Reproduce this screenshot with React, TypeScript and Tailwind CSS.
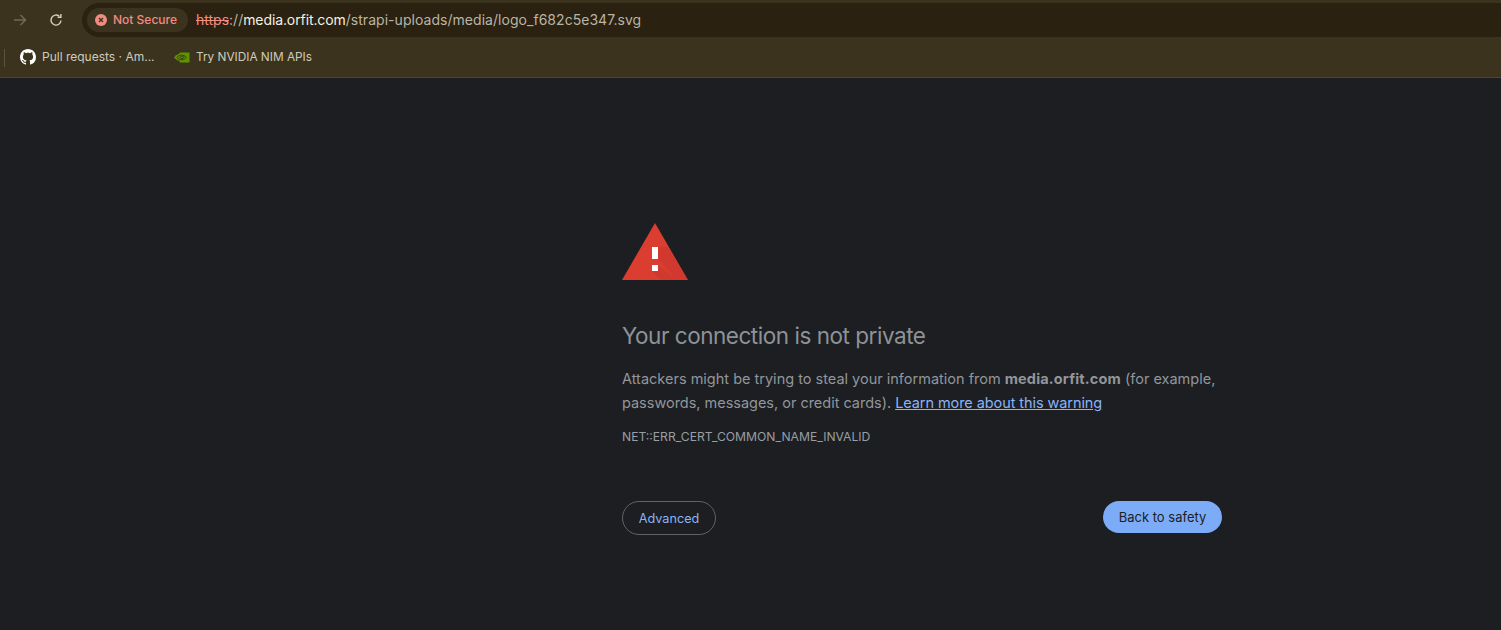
import React from "react";

function GithubMark() {
  return (
    <svg viewBox="0 0 16 16" width="16" height="16" fill="#fff">
      <path d="M8 0C3.58 0 0 3.58 0 8c0 3.54 2.29 6.53 5.47 7.59.4.07.55-.17.55-.38 0-.19-.01-.82-.01-1.49-2.01.37-2.53-.49-2.69-.94-.09-.23-.48-.94-.82-1.13-.28-.15-.68-.52-.01-.53.63-.01 1.08.58 1.23.82.72 1.21 1.87.87 2.33.66.07-.52.28-.87.51-1.07-1.78-.2-3.64-.89-3.64-3.95 0-.87.31-1.59.82-2.15-.08-.2-.36-1.02.08-2.12 0 0 .67-.21 2.2.82.64-.18 1.32-.27 2-.27s1.36.09 2 .27c1.53-1.04 2.2-.82 2.2-.82.44 1.1.16 1.92.08 2.12.51.56.82 1.27.82 2.15 0 3.07-1.87 3.75-3.65 3.95.29.25.54.73.54 1.48 0 1.07-.01 1.93-.01 2.2 0 .21.15.46.55.38A8.01 8.01 0 0 0 16 8c0-4.42-3.58-8-8-8z" />
    </svg>
  );
}

function NvidiaMark() {
  return (
    <svg viewBox="0 0 16 11" width="16" height="11">
      <rect x="5.500" y="0.500" width="10" height="10" fill="#5f9400" />
      <path d="M0 5.500C2.500 2 6 1.200 9 1.600c3 .4 5 2.400 6 3.900-1.500 2-4 3.300-7 3.500C5 9.200 2 8 0 5.500z" fill="#5f9400" />
      <path d="M2.800 5.500C4.500 3.500 7 2.900 9 3.300c1.500.3 2.800 1.200 3.500 2.200-1 1.300-2.700 2.100-4.500 2.200-2 0-3.900-.8-5.200-2.200z" fill="none" stroke="#3b331e" strokeWidth="0.900" />
      <path d="M5.600 5.500C6.600 4.600 7.800 4.400 8.900 4.700c.6.200 1 .5 1.300.8-.6.700-1.400 1-2.200 1-.9 0-1.800-.4-2.400-1z" fill="none" stroke="#3b331e" strokeWidth="0.800" />
    </svg>
  );
}

function WarningIcon() {
  return (
    <svg viewBox="0 0 66 57" width="66" height="57" className="block">
      <path d="M33 0 L66 57 L0 57 Z" fill="#db3d31" />
      <path d="M36 24 L36 36 L54 57 L66 57 L46 24 Z" fill="#c5352b" opacity="0.4" />
      <path d="M30 48 L39 57 L54 57 L36 42 L36 48 Z" fill="#c5352b" opacity="0.5" />
      <rect x="30" y="24" width="6" height="12" fill="#fff" />
      <rect x="30" y="42" width="6" height="6" fill="#fff" />
    </svg>
  );
}

export default function App() {
  return (
    <div
      className="h-[630px] w-[1501px] overflow-hidden flex flex-col bg-[#1c1e22]"
      style={{ fontFamily: "Inter, 'Liberation Sans', sans-serif" }}
    >
      <header className="h-[78px] shrink-0 bg-[#3b331e] border-b border-[#4a4534] flex flex-col">
        <div className="h-[40px] shrink-0 flex items-center pl-[12px]">
          <svg viewBox="0 0 16 16" width="16" height="16" fill="none" stroke="#726c57" strokeWidth="1.400" className="mr-[20px]">
            <path d="M2 8h11.500M8.500 3l5 5-5 5" />
          </svg>
          <svg viewBox="0 0 16 16" width="16" height="16" fill="none" stroke="#d6d0b4" strokeWidth="1.400" className="mr-[18px]">
            <path d="M13 8.500A5 5 0 1 1 11.300 4.300" />
            <path d="M9.600 5.300h3.300V2" />
          </svg>
          <div className="flex-1 h-[34px] bg-[#2a2110] rounded-l-[17px] flex items-center pl-[5px]">
            <div className="h-[24px] w-[101px] rounded-full bg-[#3b331e] flex items-center pl-[8px] gap-[6px]">
              <svg viewBox="0 0 12 12" width="12" height="12">
                <circle cx="6" cy="6" r="6" fill="#f28b82" />
                <path d="M4 4l4 4M8 4l-4 4" stroke="#3b331e" strokeWidth="1.400" />
              </svg>
              <span className="text-[12px] leading-none font-medium text-[#f28b82] whitespace-nowrap">Not Secure</span>
            </div>
            <div className="ml-[8px] mb-[2px] text-[14px] whitespace-nowrap text-[#b9b5a6]">
              <span className="text-[#f28b82] line-through">https</span>
              <span>://</span>
              <span className="text-[#f4f1e6] tracking-[-0.1px]">media.orfit.com</span>
              <span className="tracking-[0.04px]">/strapi-uploads/media/logo_f682c5e347.svg</span>
            </div>
          </div>
        </div>
        <div className="flex-1 flex items-start pt-[9px] relative pl-[20px]">
          <div className="absolute left-[4px] top-[9px] h-[18px] w-px bg-[#5a5440]" />
          <div className="flex items-center gap-[6px] w-[154px] h-[16px]">
            <GithubMark />
            <span className="leading-[16px] text-[12px] text-[#cfcbbb] whitespace-nowrap">Pull requests · Am...</span>
          </div>
          <div className="flex items-center gap-[6px] h-[16px]">
            <NvidiaMark />
            <span className="leading-[16px] text-[11.800px] text-[#cfcbbb] whitespace-nowrap">Try NVIDIA NIM APIs</span>
          </div>
        </div>
      </header>
      <main className="flex-1 flex justify-start pl-[622px]">
        <div className="w-[600px] pt-[145px] flex flex-col">
          <WarningIcon />
          <h1 className="mt-[41px] text-[22.500px] leading-[30px] font-normal tracking-[-0.47px] text-[#8e9297] whitespace-nowrap">Your connection is not private</h1>
          <p className="mt-[16px] text-[14.500px] leading-[24px] text-[#92969b]">
            Attackers might be trying to steal your information from <strong className="font-bold tracking-[0.15px]">media.orfit.com</strong> (for example, <span className="tracking-[-0.02px]">passwords, messages, or credit cards).</span>{" "}
            <a className="text-[#8ab4f8] underline tracking-[-0.08px]">Learn more about this warning</a>
          </p>
          <div className="mt-[14px] text-[12.150px] leading-[16px] text-[#9a9ea3] whitespace-nowrap">NET::ERR_CERT_COMMON_NAME_INVALID</div>
          <div className="mt-[56px] flex items-start justify-between">
            <button className="h-[34px] w-[94px] pt-[1px] rounded-full border border-[#5f6368] text-[12.700px] text-[#8ab4f8] flex items-center justify-center">Advanced</button>
            <button className="h-[32px] w-[119px] pt-[1px] rounded-full bg-[#7cacf8] text-[13px] text-[#1c1e22] flex items-center justify-center">Back to safety</button>
          </div>
        </div>
      </main>
    </div>
  );
}
